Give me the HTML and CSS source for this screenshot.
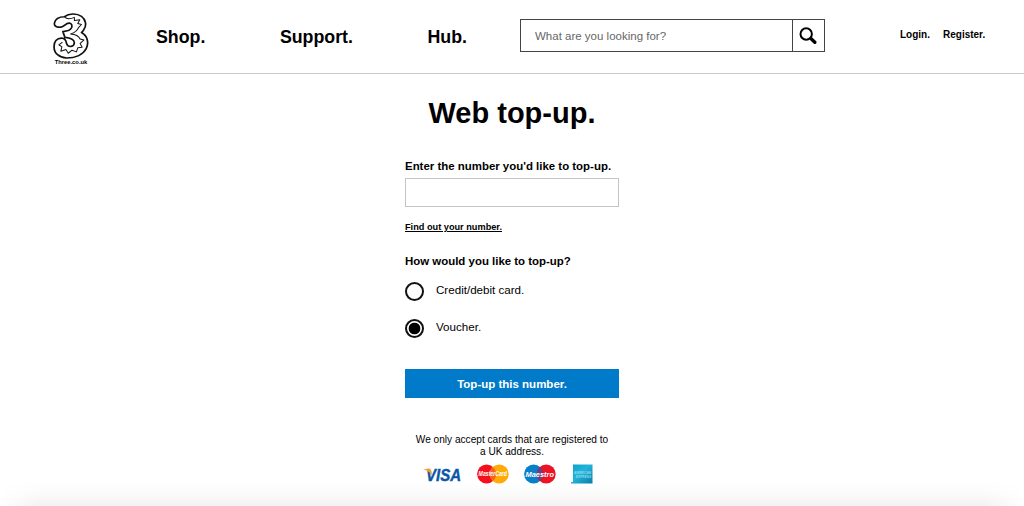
FILE: index.html
```html
<!DOCTYPE html>
<html lang="en">
<head>
    <meta charset="UTF-8">
    <meta name="viewport" content="width=device-width, initial-scale=1.0">
    <title>Three - Web top-up</title>
    <link rel="stylesheet" href="styles.css">
</head>
<body>
    <!-- Header -->
    <header class="header">
        <a class="logo" href="#">
            <svg class="logo-mark" viewBox="42 21 106 136" fill="none" stroke="#111" stroke-linejoin="round" stroke-linecap="round">
                <path stroke-width="5" d="M46 51C49 35 63 32 76 32C88 22 112 21 126 31C139 40 142 58 133 70C131 74 128 77 126 79C143 88 149 108 140 126C130 145 106 154 82 154C60 153 45 140 45 122C44 106 53 95 67 95C78 96 81 104 82 112C87 124 104 122 105 109C104 97 91 94 77 93L71 76C85 75 94 72 97 64C100 53 92 48 82 53C75 59 68 64 58 63C49 62 45 57 46 51Z"/>
                <path stroke-width="3" d="M76 32C82 40 91 40 105 34L105 43L121 41L115 52L126 55L117 64C114 73 105 79 94 83C108 84 118 89 122 98L133 101L122 111L128 122L115 124L111 136L98 131L87 140L80 129L65 134L68 121L59 115L69 108"/>
            </svg>
            <span class="logo-text">Three.co.uk</span>
        </a>
        <nav class="nav">
            <a href="#">Shop.</a>
            <a href="#">Support.</a>
            <a href="#">Hub.</a>
        </nav>
        <form class="search">
            <input class="search-input" type="text" placeholder="What are you looking for?">
            <button class="search-button" type="button" aria-label="Search">
                <svg width="18" height="18" viewBox="0 0 18 18" fill="none" stroke="#000">
                    <circle cx="7.2" cy="7" r="5.7" stroke-width="2"/>
                    <path d="M11.2 11L12.8 12.4" stroke-width="2.4"/>
                    <path d="M12.4 12.1L15.8 15.3" stroke-width="3.4" stroke-linecap="round"/>
                </svg>
            </button>
        </form>
        <div class="account">
            <a href="#">Login.</a>
            <a href="#">Register.</a>
        </div>
    </header>

    <!-- Top-up form -->
    <main class="topup">
        <h1 class="title">Web top-up.</h1>
        <form class="topup-form">
            <label class="label" for="number">Enter the number you'd like to top-up.</label>
            <input class="number-input" type="text" id="number" name="number">
            <a class="find-link" href="#">Find out your number.</a>

            <p class="question">How would you like to top-up?</p>
            <label class="option">
                <input type="radio" name="method" value="card">
                <span>Credit/debit card.</span>
            </label>
            <label class="option">
                <input type="radio" name="method" value="voucher" checked>
                <span>Voucher.</span>
            </label>

            <button class="submit-button" type="button">Top-up this number.</button>
        </form>

        <p class="card-note">We only accept cards that are registered to<br>a UK address.</p>
        <div class="cards">
            <svg width="39" height="20" viewBox="0 0 39 20">
                <text class="visa" x="3" y="17" textLength="35" lengthAdjust="spacingAndGlyphs">VISA</text>
                <path fill="#f4a02c" d="M0 5H6.4Q8 5 8.4 6.7L9.3 11.5Q6.5 7 0 5Z"/>
            </svg>
            <svg width="32" height="20" viewBox="0 0 32 20">
                <circle cx="9.6" cy="10" r="9.5" fill="#f5111b"/>
                <circle cx="22.2" cy="10" r="9.5" fill="#ffaa08"/>
                <path fill="#f5641b" d="M15.9 2.9A9.5 9.5 0 0 1 15.9 17.1A9.5 9.5 0 0 1 15.9 2.9Z"/>
                <text class="card-name" x="1.6" y="12.4" font-size="6.5" textLength="28.4" lengthAdjust="spacingAndGlyphs">MasterCard</text>
            </svg>
            <svg width="32" height="20" viewBox="0 0 32 20">
                <circle cx="9.6" cy="10" r="9.5" fill="#0a7fc9"/>
                <circle cx="22.2" cy="10" r="9.5" fill="#ed1325"/>
                <path fill="#6b3f86" d="M15.9 2.9A9.5 9.5 0 0 1 15.9 17.1A9.5 9.5 0 0 1 15.9 2.9Z"/>
                <text class="card-name" x="1.5" y="12.8" font-size="8" textLength="28.5" lengthAdjust="spacingAndGlyphs">Maestro</text>
            </svg>
            <svg width="22" height="20" viewBox="0 0 22 20">
                <defs>
                    <linearGradient id="amex" x1="0" y1="0" x2="1" y2="1">
                        <stop offset="0" stop-color="#0b9fc9"/>
                        <stop offset=".45" stop-color="#24b4d9"/>
                        <stop offset="1" stop-color="#087daa"/>
                    </linearGradient>
                </defs>
                <path fill="url(#amex)" d="M2 .5H21.5V19.5H0V18H2Z"/>
                <text class="amex-name" x="3" y="9.8" textLength="17" lengthAdjust="spacingAndGlyphs">AMERICAN</text>
                <text class="amex-name" x="5" y="14" textLength="15" lengthAdjust="spacingAndGlyphs">EXPRESS</text>
            </svg>
        </div>
    </main>
    <div class="bottom-shade"></div>
</body>
</html>
```

FILE: styles.css
```css
/* General Styles */
* {
    box-sizing: border-box;
}

body {
    font-family: "Liberation Sans", Arial, sans-serif;
    margin: 0;
    height: 506px;
    overflow: hidden;
    position: relative;
    background-color: #fff;
    color: #000;
}

a {
    color: #000;
    text-decoration: none;
}

/* Header */
.header {
    display: flex;
    align-items: flex-start;
    height: 74px;
    padding-left: 53px;
    border-bottom: 1px solid #ccc;
}

.logo {
    display: flex;
    flex-direction: column;
    align-items: center;
    width: 36px;
    padding-top: 13px;
}

.logo-mark {
    width: 36px;
    height: 46px;
}

.logo-text {
    font-size: 5.8px;
    line-height: 7px;
    font-weight: bold;
    white-space: nowrap;
}

.nav {
    display: flex;
    gap: 74.5px;
    width: 364px;
    margin-left: 67px;
    padding-top: 27px;
    font-size: 17.8px;
    line-height: 21px;
    font-weight: bold;
}

.search {
    display: flex;
    width: 305px;
    height: 33px;
    margin-top: 19px;
    border: 1px solid #444;
}

.search-input {
    flex: 1;
    min-width: 0;
    padding: 0 14px;
    border: none;
    font-family: inherit;
    font-size: 11.5px;
}

.search-input::placeholder {
    color: #666;
}

.search-button {
    display: flex;
    align-items: center;
    justify-content: center;
    width: 32px;
    padding: 0 1px 0 0;
    border: none;
    border-left: 1px solid #444;
    background: none;
}

.account {
    display: flex;
    gap: 13px;
    margin-left: 75px;
    padding-top: 29px;
    font-size: 10px;
    line-height: 12px;
    font-weight: bold;
}

/* Top-up form */
.topup {
    width: 214px;
    margin-left: 405px;
}

.title {
    margin: 0;
    padding-top: 22px;
    font-size: 29px;
    line-height: 34px;
    text-align: center;
}

.topup-form {
    display: flex;
    flex-direction: column;
    align-items: flex-start;
    padding-top: 29px;
}

.label,
.question {
    margin: 0;
    font-size: 11.45px;
    line-height: 14px;
    font-weight: bold;
    white-space: nowrap;
}

.number-input {
    width: 214px;
    height: 29px;
    margin-top: 5px;
    border: 1px solid #c4c4c4;
}

.find-link {
    margin-top: 15px;
    font-size: 9.2px;
    line-height: 11px;
    font-weight: bold;
    text-decoration: underline;
}

.question {
    margin-top: 21px;
}

.option {
    display: flex;
    gap: 12px;
    height: 19px;
    margin-top: 14px;
    font-size: 11.6px;
    line-height: 16px;
}

.option + .option {
    margin-top: 18px;
}

.option input {
    appearance: none;
    width: 19px;
    height: 19px;
    margin: 0;
    border: 2px solid #111;
    border-radius: 50%;
}

.option input:checked {
    background: radial-gradient(circle, #000 5.5px, #fff 6.2px);
}

.submit-button {
    width: 214px;
    height: 29px;
    margin-top: 31px;
    padding: 1px 0 0;
    border: none;
    background-color: #007ac9;
    color: #fff;
    font-family: inherit;
    font-size: 11.5px;
    font-weight: bold;
}

/* Accepted cards */
.card-note {
    margin: 36px 0 0;
    font-size: 10.1px;
    line-height: 12px;
    text-align: center;
    white-space: nowrap;
}

.cards {
    display: flex;
    align-items: center;
    padding: 6px 0 0 18px;
    gap: 15px;
}

.cards svg {
    overflow: visible;
}

.visa {
    fill: #0b56a6;
    stroke: #0b56a6;
    stroke-width: 0.4px;
    font-size: 16px;
    font-weight: bold;
    font-style: italic;
}

.card-name {
    fill: #fff;
    font-weight: bold;
    font-style: italic;
}

.amex-name {
    fill: #8fdaec;
    font-size: 4px;
    font-weight: bold;
}

.bottom-shade {
    position: absolute;
    left: 0;
    right: 0;
    bottom: 0;
    height: 26px;
    background: linear-gradient(to right, #fff, rgba(255, 255, 255, 0) 40px, rgba(255, 255, 255, 0) 984px, #fff),
        linear-gradient(rgba(0, 0, 0, 0), rgba(0, 0, 0, 0.015) 50%, rgba(0, 0, 0, 0.05));
}
```
